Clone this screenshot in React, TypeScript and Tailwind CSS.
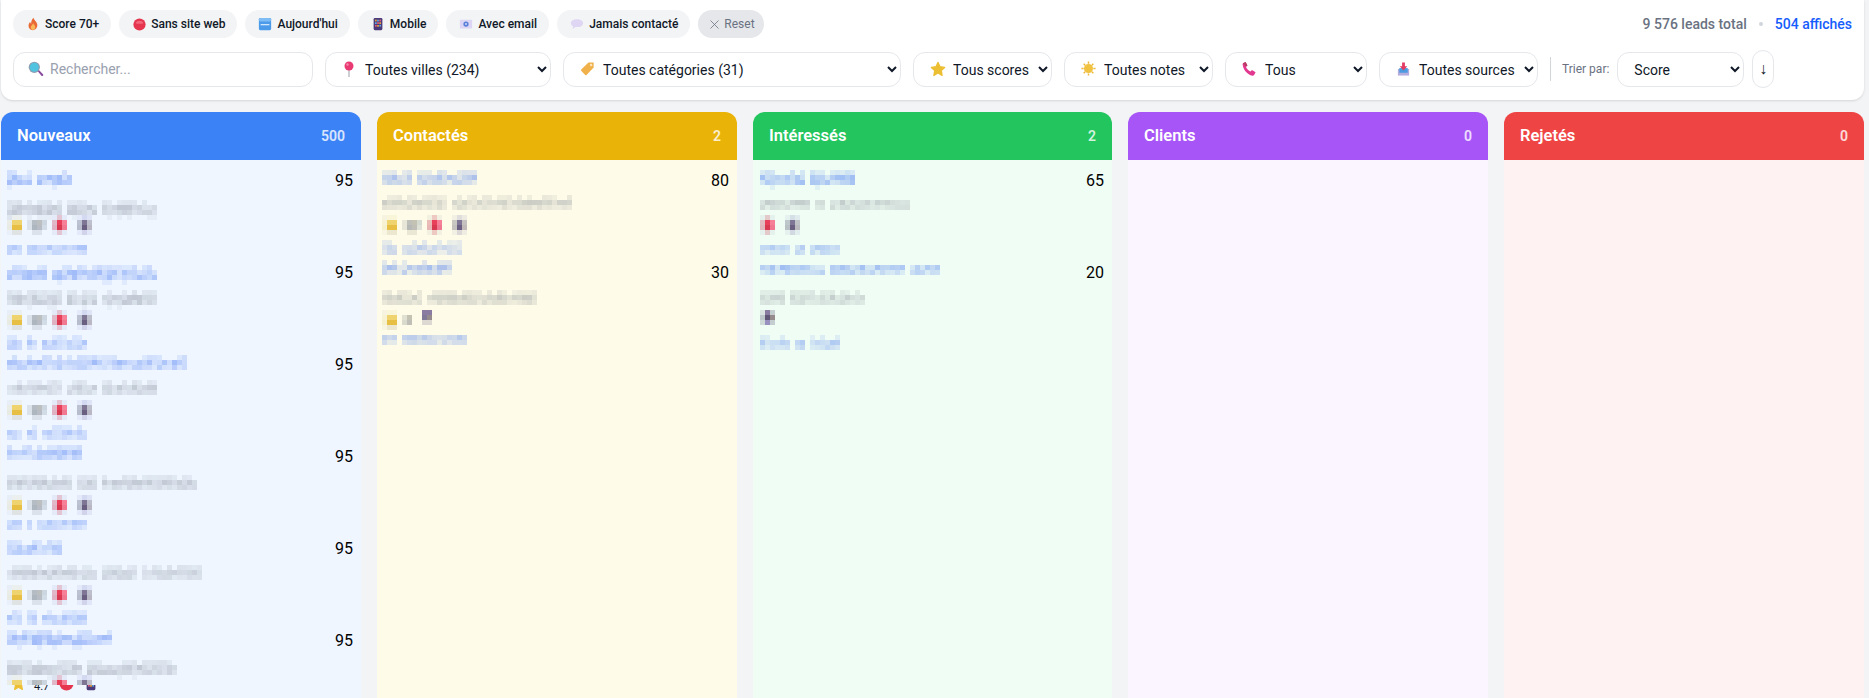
import { X } from "lucide-react";
import type { ReactNode } from "react";

const Flame = () => (
  <svg width="14" height="14" viewBox="0 0 16 16">
    <path d="M8.500 .8c.4 2.600 3.600 4.200 4.300 7.200.8 3.400-1.700 7-4.900 7S2.400 12.200 3 8.800c.3-1.300 1-2.300 1.800-3 .1 1 .5 1.700 1.100 2C5.700 5.300 6.800 2.600 8.500 .8z" fill="#ea6a35" />
    <path d="M8.200 7c.4 1.500 2.400 2.400 2.400 4.600 0 1.800-1.200 3.200-2.700 3.200s-2.600-1.400-2.500-3c.1-1.900 2.200-2.900 2.800-4.800z" fill="#f9b95a" />
  </svg>
);
const RedBall = ({ size = 13 }: { size?: number }) => (
  <svg width={size} height={size} viewBox="0 0 16 16">
    <circle cx="8" cy="8" r="7.500" fill="#e5354f" />
    <path d="M3 6a6 6 0 0 1 10 0c-2 1.500-8 1.500-10 0z" fill="#f2677c" />
  </svg>
);
const NewIcon = () => (
  <svg width="14" height="14" viewBox="0 0 16 16">
    <rect x="1" y="1" width="14" height="14" rx="1.500" fill="#4c9bea" />
    <rect x="1" y="1" width="14" height="4" rx="1.500" fill="#7dbcf4" />
    <path d="M3 8h10v1.500H3z" fill="#cfe6fb" />
  </svg>
);
const Phone = () => (
  <svg width="14" height="14" viewBox="0 0 16 16">
    <rect x="3" y="1" width="10" height="14" rx="1.500" fill="#4b3a78" />
    <path d="M4.500 3h2v2h-2z" fill="#e9a23b" />
    <path d="M7 3h2v2H7z" fill="#5fa8e8" />
    <path d="M9.500 3h2v2h-2z" fill="#e35d7a" />
    <path d="M4.500 6h2v2h-2z" fill="#5fa8e8" />
    <path d="M7 6h2v2H7z" fill="#e35d7a" />
    <path d="M9.500 6h2v2h-2z" fill="#e9a23b" />
    <path d="M4.500 9h2v2h-2z" fill="#e35d7a" />
    <path d="M7 9h2v2H7z" fill="#e9a23b" />
    <path d="M9.500 9h2v2h-2z" fill="#5fa8e8" />
  </svg>
);
const Mail = () => (
  <svg width="14" height="14" viewBox="0 0 16 16">
    <rect x="1" y="3" width="14" height="10" rx="1" fill="#dcd6f4" />
    <circle cx="8" cy="8" r="3" fill="#5a7fd8" />
    <circle cx="8" cy="8" r="1.200" fill="#c6d4f5" />
  </svg>
);
const Bubble = () => (
  <svg width="14" height="14" viewBox="0 0 16 16">
    <path d="M8 2.500c4 0 7 1.900 7 4.500s-3 4.500-7 4.500c-.7 0-1.400 0-2-.2L3 14l.6-3.400C2 9.800 1 8.500 1 7c0-2.600 3-4.500 7-4.500z" fill="#ded6f3" />
  </svg>
);
const Lens = () => (
  <svg width="16" height="16" viewBox="0 0 16 16">
    <path d="M9.500 10l1.200-1.200 4.300 4.400c.5.500.4 1-.1 1.500s-1 .5-1.500 0z" fill="#8a4c9e" />
    <circle cx="6.300" cy="6.300" r="5.600" fill="#8f9db0" />
    <circle cx="6.300" cy="6.300" r="4.500" fill="#4fc3df" />
  </svg>
);
const Pin = () => (
  <svg width="14" height="16" viewBox="0 0 14 16">
    <path d="M6.500 8h1v8h-1z" fill="#9aa0a8" />
    <circle cx="7" cy="5" r="4.500" fill="#ea3a73" />
    <circle cx="5.500" cy="3.500" r="1.200" fill="#f68aad" />
  </svg>
);
const Tag = () => (
  <svg width="15" height="15" viewBox="0 0 16 16">
    <path d="M9 1.500h5.500V7L7 14.800c-.5.500-1 .4-1.500 0L1.300 10.500c-.4-.5-.4-1 0-1.400z" fill="#f0b04a" />
    <circle cx="11.800" cy="4.200" r="1.300" fill="#fbe6bd" />
  </svg>
);
const Star = ({ size = 15 }: { size?: number }) => (
  <svg width={size} height={size} viewBox="0 0 16 16">
    <path d="M8 1.500l2 4.300 4.600.6-3.400 3.200.9 4.700L8 12l-4.100 2.300.9-4.700L1.400 6.400 6 5.800z" fill="#ecbf34" stroke="#ecbf34" strokeWidth="1.400" strokeLinejoin="round" />
  </svg>
);
const Sun = () => (
  <svg width="15" height="15" viewBox="0 0 16 16">
    <circle cx="8" cy="8" r="4.800" fill="#f0c23f" />
    <path d="M7.200 .5h1.600v2.300H7.200zM7.200 13.200h1.600v2.300H7.200zM.5 7.200h2.300v1.600H.5zM13.200 7.200h2.300v1.600h-2.300zM2.300 3.400l1.100-1.100 1.600 1.600-1.100 1.100zM11 12.100l1.100-1.100 1.600 1.600-1.100 1.100zM2.300 12.600l1.600-1.600 1.100 1.100-1.600 1.600zM11 3.900l1.600-1.600 1.100 1.100-1.600 1.600z" fill="#eeb838" />
  </svg>
);
const Handset = () => (
  <svg width="15" height="15" viewBox="0 0 16 16">
    <path d="M1 2.500 3.800 1l2 3.700-1.600 1.300c.7 2 2.600 4 5 5.200l1.400-1.500 3.900 2.400-1.600 2.900c-.4.600-1 .8-1.700.7C5.500 14.500 1.500 9.500.7 4c-.1-.6 0-1.100.3-1.500z" fill="#e2388f" />
    <path d="M1 2.500 3.800 1l2 3.700-1.600 1.300z" fill="#b5405f" />
  </svg>
);
const Inbox = () => (
  <svg width="15" height="16" viewBox="0 0 16 16">
    <path d="M2 8h12v7H2z" fill="#b5addf" />
    <path d="M3.500 7h9v5h-9z" fill="#4b9be0" />
    <path d="M6.500 1h3v4h2.500L8 9.500 4 5h2.500z" fill="#e23b63" />
  </svg>
);

function hash(n: number) {
  const s = Math.sin(n * 127.1 + 311.7) * 43758.5453;
  return s - Math.floor(s);
}

type Line = { y: number; cells: number; rows: number; gaps?: number[]; seed: number };
type Card = {
  top: number;
  score: number;
  name: Line;
  sub: Line;
  phone?: Line;
  iconsY: number;
  icons: string[];
  cut?: boolean;
};

function blocks(l: Line, fill: string, maxA: number, top: number) {
  const out: ReactNode[] = [];
  for (let r = 0; r < l.rows; r++) {
    for (let c = 0; c < l.cells; c++) {
      if (l.gaps?.includes(c)) continue;
      const rnd = hash(l.seed * 97 + r * 41 + c * 7);
      const rowWeight = l.rows > 2 && r === 0 ? 0.45 : l.rows > 3 && r === l.rows - 1 ? 0.2 : r === l.rows - 1 ? 0.7 : 1;
      if (r === 0 && l.rows > 2 && rnd < 0.3) continue;
      if (l.rows > 3 && r === l.rows - 1 && rnd < 0.8) continue;
      out.push(
        <rect key={`${l.seed}-${r}-${c}`} x={c * 5} y={l.y - top + r * 5} width="5" height="5" fill={fill} opacity={(0.14 + rnd * maxA) * rowWeight} />
      );
    }
  }
  return out;
}

const redCells = [
  ["#40408010", "#c0305040", "#40408010"],
  ["#c0305050", "#e8405a", "#f58098"],
  ["#c0305058", "#d83850", "#f07890"],
  ["#40408010", "#c0305040", "#40408010"],
];
const purpleCells = [
  ["#4040a010", "#4040a028", "#4040a018"],
  ["#40406048", "#7f7595", "#80788c70"],
  ["#40406050", "#6a5f80", "#80708478"],
  ["#4040a010", "#50409030", "#4040a014"],
];

const cellSets: Record<string, { dx: number; colors: string[][] }> = {
  star: {
    dx: 0,
    colors: [
      ["#00000008", "#c8b04018", "#c8b04018"],
      ["#c8b04020", "#eed36e", "#eed36e"],
      ["#c8b04028", "#e8bf45", "#e8bf45"],
      ["#00000006", "#8a805028", "#8a805028"],
    ],
  },
  val: {
    dx: 20,
    colors: [
      ["#0000", "#0000", "#0000", "#0000"],
      ["#8a908f30", "#7c828880", "#78786f70", "#7c8ea050"],
      ["#8a908f30", "#6c748080", "#70727c70", "#7c8ea040"],
      ["#0000", "#00000014", "#00000014", "#0000"],
    ],
  },
  valShort: {
    dx: 20,
    colors: [
      ["#0000", "#0000"],
      ["#8a908f40", "#78786f70"],
      ["#8a908f50", "#70727c70"],
      ["#0000", "#0000"],
    ],
  },
  red: { dx: 45, colors: redCells },
  purple: { dx: 70, colors: purpleCells },
  purpleC: {
    dx: 40,
    colors: [
      ["#8a7ca0", "#8a7ca0"],
      ["#807a98", "#958a8c"],
      ["#50407030", "#50407030"],
    ],
  },
  redL: { dx: 0, colors: redCells },
  purpleL: { dx: 25, colors: purpleCells },
  purpleO: {
    dx: 0,
    colors: [
      ["#40406020", "#8a7ca0", "#40406040"],
      ["#40406048", "#5f5575", "#958a8c"],
      ["#40406030", "#9a90c0", "#40406040"],
    ],
  },
};

function CardRow({ card, bg }: { card: Card; bg: string }) {
  const t = card.top;
  return (
    <div className="flex h-[92px] items-start justify-between pr-2">
      <svg width="270" height="92" className="block shrink-0 overflow-visible">
        {card.cut && (
          <g>
            <g transform={`translate(4 ${card.iconsY - t + 1})`}><Star size={15} /></g>
            <text x="27" y={card.iconsY - t + 15} fontSize="11" fill="#111827">4.7</text>
            <g transform={`translate(52 ${card.iconsY - t + 1})`}><RedBall size={15} /></g>
            <g transform={`translate(77 ${card.iconsY - t + 2})`}><Phone /></g>
            <rect x="0" y={card.iconsY - t} width="100" height="10" fill={bg} />
          </g>
        )}
        {blocks(card.name, "#3b6ff0", 0.3, t)}
        {blocks(card.sub, "#6b7280", 0.2, t)}
        {card.phone && blocks(card.phone, "#3b6ff0", 0.22, t)}
        {card.icons.map((name) =>
          cellSets[name].colors.slice(0, card.cut ? 2 : 4).map((row, r) =>
            row.map((c, i) => (
              <rect key={`${name}${r}${i}`} x={cellSets[name].dx + i * 5} y={card.iconsY - t + r * 5} width="5" height="5" fill={c} />
            ))
          )
        )}
      </svg>
      <span className="text-base leading-6 text-black">{card.score}</span>
    </div>
  );
}

const ic = ["star", "val", "red", "purple"];

const nouveaux: Card[] = [
  { top: 169, score: 95, name: { y: 170, cells: 13, rows: 4, gaps: [5], seed: 1 }, sub: { y: 200, cells: 30, rows: 4, gaps: [11, 18], seed: 2 }, iconsY: 215, icons: ic, phone: { y: 245, cells: 16, rows: 2, gaps: [3], seed: 3 } },
  { top: 261, score: 95, name: { y: 265, cells: 30, rows: 4, gaps: [8], seed: 4 }, sub: { y: 290, cells: 30, rows: 4, gaps: [11, 18], seed: 5 }, iconsY: 310, icons: ic, phone: { y: 335, cells: 16, rows: 3, gaps: [3, 6], seed: 6 } },
  { top: 353, score: 95, name: { y: 355, cells: 36, rows: 3, seed: 7 }, sub: { y: 380, cells: 30, rows: 3, gaps: [11, 18], seed: 8 }, iconsY: 400, icons: ic, phone: { y: 425, cells: 16, rows: 3, gaps: [3, 6], seed: 9 } },
  { top: 445, score: 95, name: { y: 445, cells: 15, rows: 3, seed: 10 }, sub: { y: 475, cells: 38, rows: 3, gaps: [13, 18], seed: 11 }, iconsY: 495, icons: ic, phone: { y: 520, cells: 16, rows: 2, gaps: [3, 5], seed: 12 } },
  { top: 537, score: 95, name: { y: 540, cells: 11, rows: 3, seed: 13 }, sub: { y: 565, cells: 39, rows: 3, gaps: [18, 26], seed: 14 }, iconsY: 585, icons: ic, phone: { y: 610, cells: 16, rows: 3, gaps: [3, 6], seed: 15 } },
  { top: 629, score: 95, name: { y: 630, cells: 21, rows: 4, seed: 16 }, sub: { y: 660, cells: 34, rows: 4, gaps: [15], seed: 17 }, iconsY: 675, icons: ic, cut: true },
];

const contactes: Card[] = [
  { top: 169, score: 80, name: { y: 170, cells: 19, rows: 3, gaps: [6], seed: 21 }, sub: { y: 195, cells: 38, rows: 3, gaps: [13], seed: 22 }, iconsY: 215, icons: ic, phone: { y: 240, cells: 16, rows: 3, gaps: [3], seed: 23 } },
  { top: 261, score: 30, name: { y: 260, cells: 14, rows: 3, seed: 24 }, sub: { y: 290, cells: 31, rows: 3, gaps: [8], seed: 25 }, iconsY: 310, icons: ["star", "valShort", "purpleC"], phone: { y: 335, cells: 17, rows: 2, gaps: [3], seed: 26 } },
];

const interesses: Card[] = [
  { top: 169, score: 65, name: { y: 170, cells: 19, rows: 4, gaps: [9], seed: 31 }, sub: { y: 200, cells: 30, rows: 2, gaps: [10, 13], seed: 32 }, iconsY: 215, icons: ["redL", "purpleL"], phone: { y: 245, cells: 16, rows: 2, gaps: [6, 9], seed: 33 } },
  { top: 261, score: 20, name: { y: 265, cells: 36, rows: 2, gaps: [13, 29], seed: 34 }, sub: { y: 290, cells: 21, rows: 3, gaps: [5], seed: 35 }, iconsY: 310, icons: ["purpleO"], phone: { y: 335, cells: 16, rows: 3, gaps: [6, 9], seed: 36 } },
];

const columns = [
  { title: "Nouveaux", count: 500, head: "bg-[#3b82f6]", body: "bg-[#eff6ff]", bg: "#eff6ff", cards: nouveaux, pad: "pl-[6px]", w: "w-[360px]" },
  { title: "Contactés", count: 2, head: "bg-[#eab308]", body: "bg-[#fefce8]", bg: "#fefce8", cards: contactes, pad: "pl-[5px]", w: "w-[360px]" },
  { title: "Intéressés", count: 2, head: "bg-[#22c55e]", body: "bg-[#f0fdf4]", bg: "#f0fdf4", cards: interesses, pad: "pl-[7px]", w: "w-[359px]" },
  { title: "Clients", count: 0, head: "bg-[#a855f7]", body: "bg-[#faf5ff]", bg: "#faf5ff", cards: [], pad: "pl-[6px]", w: "w-[360px]" },
  { title: "Rejetés", count: 0, head: "bg-[#ef4444]", body: "bg-[#fef2f2]", bg: "#fef2f2", cards: [], pad: "pl-[6px]", w: "w-[360px]" },
];

const chips = [
  { label: "Score 70+", icon: <Flame /> },
  { label: "Sans site web", icon: <RedBall /> },
  { label: "Aujourd'hui", icon: <NewIcon /> },
  { label: "Mobile", icon: <Phone /> },
  { label: "Avec email", icon: <Mail /> },
  { label: "Jamais contacté", icon: <Bubble /> },
];

const selects = [
  { label: "Toutes villes (234)", icon: <Pin />, w: "w-[226px]" },
  { label: "Toutes catégories (31)", icon: <Tag />, w: "w-[338px]" },
  { label: "Tous scores", icon: <Star size={16} />, w: "w-[139px]" },
  { label: "Toutes notes", icon: <Sun />, w: "w-[149px]" },
  { label: "Tous", icon: <Handset />, w: "w-[142px]" },
  { label: "Toutes sources", icon: <Inbox />, w: "w-[159px]" },
];

export default function App() {
  return (
    <div className="h-[698px] overflow-hidden bg-[#f3f4f6] pl-px pr-[5px] font-[Roboto,sans-serif] text-gray-900">
      <div className="h-[100px] rounded-b-xl bg-white px-3 pt-[10px] shadow">
        <div className="flex items-center justify-between">
          <div className="flex items-center gap-2">
            {chips.map((c) => (
              <button key={c.label} className="flex h-7 items-center rounded-full bg-gray-100 pl-3 pr-3 text-xs font-medium text-gray-900">
                <span className="flex w-5 items-center justify-center pr-1">{c.icon}</span>
                {c.label}
              </button>
            ))}
            <button className="flex h-7 items-center gap-0.5 rounded-full bg-gray-200 px-[9px] text-xs text-gray-500">
              <X size={15} strokeWidth={1.25} />
              Reset
            </button>
          </div>
          <div className="flex items-center gap-3 text-[14px]">
            <span className="font-medium text-gray-500">9 576 leads total</span>
            <span className="h-1 w-1 rounded-full bg-gray-300" />
            <span className="font-medium text-blue-600">504 affichés</span>
          </div>
        </div>
        <div className="mt-3 flex h-[38px] items-center gap-3">
          <div className="relative w-[300px] shrink-0">
            <span className="absolute left-[15px] top-[9px]"><Lens /></span>
            <input placeholder="Rechercher..." className="h-[35px] w-full rounded-xl border border-gray-200 bg-white pl-9 pr-3 text-sm outline-none placeholder:text-gray-400" />
          </div>
          {selects.map((s) => (
            <div key={s.label} className={`relative shrink-0 ${s.w}`}>
              <span className="absolute left-[17px] top-[9px]">{s.icon}</span>
              <select className="h-[35px] w-full rounded-xl border border-gray-200 bg-white pl-[35px] pt-px text-sm text-gray-900 outline-none">
                <option>{s.label}</option>
              </select>
            </div>
          ))}
          <div className="flex shrink-0 items-center gap-2">
            <span className="h-6 w-px bg-gray-300" />
            <span className="ml-[3px] text-xs text-gray-500">Trier par:</span>
            <select className="h-[35px] w-[127px] rounded-xl border border-gray-200 bg-white pl-3 pr-4 pt-px text-sm text-gray-900 outline-none">
              <option>Score</option>
            </select>
            <button className="h-[38px] w-[22px] rounded-xl border border-gray-200 bg-white text-base text-gray-900">↓</button>
          </div>
        </div>
      </div>
      <div className="mt-3 flex gap-4">
        {columns.map((col) => (
          <div key={col.title} className={`shrink-0 ${col.w}`}>
            <div className={`flex h-12 items-center justify-between rounded-t-xl px-4 text-white ${col.head}`}>
              <span className="pt-px text-[16.5px] font-semibold">{col.title}</span>
              <span className="text-sm font-semibold text-white/80">{col.count}</span>
            </div>
            <div className={`h-[538px] pt-[9px] ${col.body} ${col.pad}`}>
              {col.cards.map((card) => (
                <CardRow key={card.top} card={card} bg={col.bg} />
              ))}
            </div>
          </div>
        ))}
      </div>
    </div>
  );
}
